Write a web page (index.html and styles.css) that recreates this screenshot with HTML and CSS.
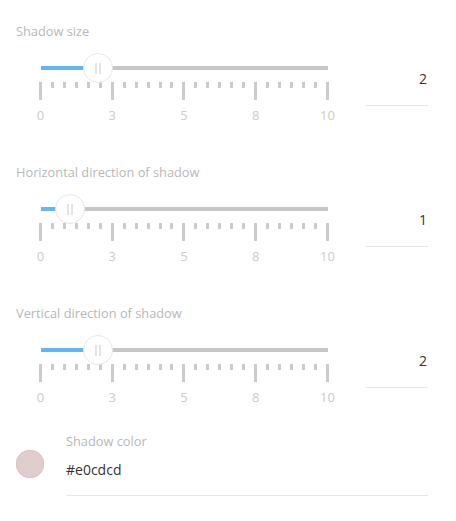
FILE: index.html
```html
<!DOCTYPE html>
<html>
<head>
<meta charset="utf-8">
<link rel="stylesheet" href="styles.css">
</head>
<body>
<div class="panel">
  <section class="group">
    <div class="title">Shadow size</div>
    <div class="row">
      <div class="slider">
        <div class="track">
          <div class="fill" style="width:20%"></div>
          <div class="thumb" style="left:20%"><span></span><span></span></div>
        </div>
        <div class="ticks">
          <i class="major"></i><i></i><i></i><i></i><i></i><i></i>
          <i class="major"></i><i></i><i></i><i></i><i></i><i></i>
          <i class="major"></i><i></i><i></i><i></i><i></i><i></i>
          <i class="major"></i><i></i><i></i><i></i><i></i><i></i>
          <i class="major"></i>
        </div>
        <div class="labels"><span><b>0</b></span><span><b>3</b></span><span><b>5</b></span><span><b>8</b></span><span><b>10</b></span></div>
      </div>
      <div class="value">2</div>
    </div>
  </section>
  <section class="group">
    <div class="title">Horizontal direction of shadow</div>
    <div class="row">
      <div class="slider">
        <div class="track">
          <div class="fill" style="width:10%"></div>
          <div class="thumb" style="left:10%"><span></span><span></span></div>
        </div>
        <div class="ticks">
          <i class="major"></i><i></i><i></i><i></i><i></i><i></i>
          <i class="major"></i><i></i><i></i><i></i><i></i><i></i>
          <i class="major"></i><i></i><i></i><i></i><i></i><i></i>
          <i class="major"></i><i></i><i></i><i></i><i></i><i></i>
          <i class="major"></i>
        </div>
        <div class="labels"><span><b>0</b></span><span><b>3</b></span><span><b>5</b></span><span><b>8</b></span><span><b>10</b></span></div>
      </div>
      <div class="value">1</div>
    </div>
  </section>
  <section class="group">
    <div class="title">Vertical direction of shadow</div>
    <div class="row">
      <div class="slider">
        <div class="track">
          <div class="fill" style="width:20%"></div>
          <div class="thumb" style="left:20%"><span></span><span></span></div>
        </div>
        <div class="ticks">
          <i class="major"></i><i></i><i></i><i></i><i></i><i></i>
          <i class="major"></i><i></i><i></i><i></i><i></i><i></i>
          <i class="major"></i><i></i><i></i><i></i><i></i><i></i>
          <i class="major"></i><i></i><i></i><i></i><i></i><i></i>
          <i class="major"></i>
        </div>
        <div class="labels"><span><b>0</b></span><span><b>3</b></span><span><b>5</b></span><span><b>8</b></span><span><b>10</b></span></div>
      </div>
      <div class="value">2</div>
    </div>
  </section>
  <div class="color-row">
    <div class="swatch"></div>
    <div class="color-field">
      <div class="color-label">Shadow color</div>
      <div class="color-value">#e0cdcd</div>
    </div>
  </div>
</div>
</body>
</html>
```
FILE: styles.css
```css
html, body {
  margin: 0;
  padding: 0;
  background: #fff;
}
body {
  font-family: "Open Sans", "Noto Sans", sans-serif;
  width: 456px;
  height: 521px;
  overflow: hidden;
}
.panel {
  padding-left: 16px;
}
.group {
  height: 141px;
  padding-top: 22px;
  box-sizing: border-box;
}
.title {
  font-size: 12.8px;
  line-height: 18px;
  color: #b8b8b8;
  white-space: nowrap;
}
.row {
  display: flex;
  margin-top: 13px;
}
.slider {
  width: 350px;
  padding-left: 23px;
  box-sizing: border-box;
}
.track {
  position: relative;
  margin-left: 2px;
  width: 287px;
  height: 30px;
}
.track::before {
  content: "";
  position: absolute;
  left: 0;
  right: 0;
  top: 13px;
  height: 4px;
  background: #c6c6c6;
}
.fill {
  position: absolute;
  left: 0;
  top: 13px;
  height: 4px;
  background: #64b5f6;
}
.thumb {
  position: absolute;
  top: 0;
  width: 30px;
  height: 30px;
  box-sizing: border-box;
  border: 1px solid #e6e6e6;
  border-radius: 50%;
  background: #fff;
  transform: translateX(-50%);
  display: flex;
  justify-content: center;
  align-items: center;
  gap: 2px;
}
.thumb span {
  width: 2px;
  height: 11px;
  background: #e4e4e4;
}
.ticks {
  display: flex;
  justify-content: space-between;
  align-items: flex-start;
  width: 290px;
  margin-top: -1px;
  height: 18px;
}
.ticks i {
  display: block;
  width: 3px;
  height: 6px;
  background: #cacaca;
}
.ticks i.major {
  height: 18px;
}
.labels {
  display: flex;
  justify-content: space-between;
  width: 287px;
  padding: 0 1.5px;
  margin-top: 6px;
  font-size: 13px;
  line-height: 18px;
  color: #cccccc;
}
.labels span {
  width: 0;
  display: flex;
  justify-content: center;
}
.labels b {
  font-weight: 400;
}
.value {
  width: 62px;
  height: 53px;
  box-sizing: border-box;
  padding: 16px 1px 0 0;
  border-bottom: 1px solid #e6e6e6;
  text-align: right;
  font-size: 14px;
  line-height: 20px;
  color: #333;
}
.color-row {
  display: flex;
  align-items: center;
  margin-top: 9px;
}
.swatch {
  width: 28px;
  height: 28px;
  border-radius: 50%;
  background: #e0cdcd;
  box-shadow: inset 0 0 0 1px #d8c4c4;
}
.color-field {
  margin-left: 22px;
  width: 362px;
  padding-bottom: 15px;
  border-bottom: 1px solid #e6e6e6;
}
.color-label {
  font-size: 12.8px;
  line-height: 18px;
  color: #b8b8b8;
}
.color-value {
  margin-top: 10px;
  font-size: 14px;
  line-height: 20px;
  color: #333;
}
```
